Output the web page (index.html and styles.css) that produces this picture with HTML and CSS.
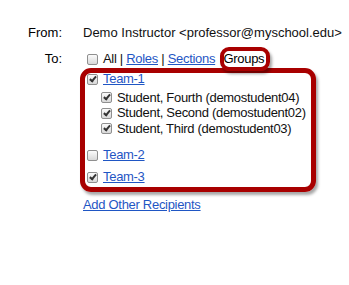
FILE: index.html
```html
<!DOCTYPE html>
<html lang="en">
<head>
  <meta charset="UTF-8">
  <title>Compose Message</title>
  <link rel="stylesheet" href="styles.css">
</head>
<body>
  <div class="compose">
    <div class="field">
      <div class="label">From:</div>
      <div class="value">Demo Instructor &lt;professor@myschool.edu&gt;</div>
    </div>

    <div class="field to">
      <div class="label">To:</div>
      <div class="recipients">
        <div class="row pick">
          <input type="checkbox">
          <span>All | <a href="#">Roles</a> | <a href="#">Sections</a> <span class="current">Groups</span></span>
        </div>

        <!-- group list -->
        <div class="row team first">
          <input type="checkbox" checked>
          <a href="#">Team-1</a>
        </div>
        <div class="members">
          <div class="row member"><input type="checkbox" checked><span>Student, Fourth (demostudent04)</span></div>
          <div class="row member"><input type="checkbox" checked><span>Student, Second (demostudent02)</span></div>
          <div class="row member"><input type="checkbox" checked><span>Student, Third (demostudent03)</span></div>
        </div>
        <div class="row team second">
          <input type="checkbox">
          <a href="#">Team-2</a>
        </div>
        <div class="row team third">
          <input type="checkbox" checked>
          <a href="#">Team-3</a>
        </div>

        <div class="row add"><a href="#">Add Other Recipients</a></div>

        <!-- highlight callouts -->
        <div class="callout callout-list"></div>
        <div class="callout callout-tab"></div>
      </div>
    </div>
  </div>
</body>
</html>
```

FILE: styles.css
```css
:root {
  --link-color: #1f56c4;
  --callout-color: #a80000;
}

body {
  margin: 0;
  padding-top: 25px;
  font-family: "Liberation Sans", Arial, sans-serif;
  font-size: 13px;
  line-height: 16px;
  color: #111;
  background: white;
}

a {
  color: var(--link-color);
  text-decoration: underline;
}

.field {
  display: grid;
  grid-template-columns: 62px 1fr;
  column-gap: 21px;
}

.field.to {
  margin-top: 10px;
}

.label {
  text-align: right;
  color: #000;
}

.recipients {
  position: relative;
  letter-spacing: -0.3px;
}

.row {
  display: flex;
  align-items: center;
  height: 16px;
  white-space: nowrap;
}

.current {
  color: #000;
  padding-left: 5px;
}

.team.first {
  margin-top: 4px;
}

.members {
  margin-top: 3px;
}

.member {
  height: 15.5px;
  padding-left: 14px;
}

.team.second {
  margin-top: 10.5px;
}

.team.third {
  margin-top: 6px;
}

.add {
  margin-top: 12px;
}

/* old style grey checkboxes */
input[type="checkbox"] {
  appearance: none;
  -webkit-appearance: none;
  box-sizing: border-box;
  width: 11px;
  height: 11px;
  margin: 0 5px 0 4px;
  border: 1px solid #8f8f8f;
  border-radius: 2px;
  background: linear-gradient(#fbfbfb, #d8d8d8);
  position: relative;
  flex: none;
}

input[type="checkbox"]:checked::after {
  content: "";
  position: absolute;
  left: 3px;
  top: 0;
  width: 2px;
  height: 5px;
  border-right: 2px solid #333;
  border-bottom: 2px solid #333;
  transform: rotate(40deg);
}

.callout {
  position: absolute;
  box-sizing: border-box;
  border: 5px solid var(--callout-color);
  box-shadow: 2px 3px 3px rgba(0,0,0,0.35);
  pointer-events: none;
}

.callout-list {
  left: -3px;
  top: 17px;
  width: 236px;
  height: 124px;
  border-radius: 11px;
}

.callout-tab {
  left: 137px;
  top: -4px;
  width: 50px;
  height: 24px;
  border-width: 4px;
  border-radius: 9px;
}
```
